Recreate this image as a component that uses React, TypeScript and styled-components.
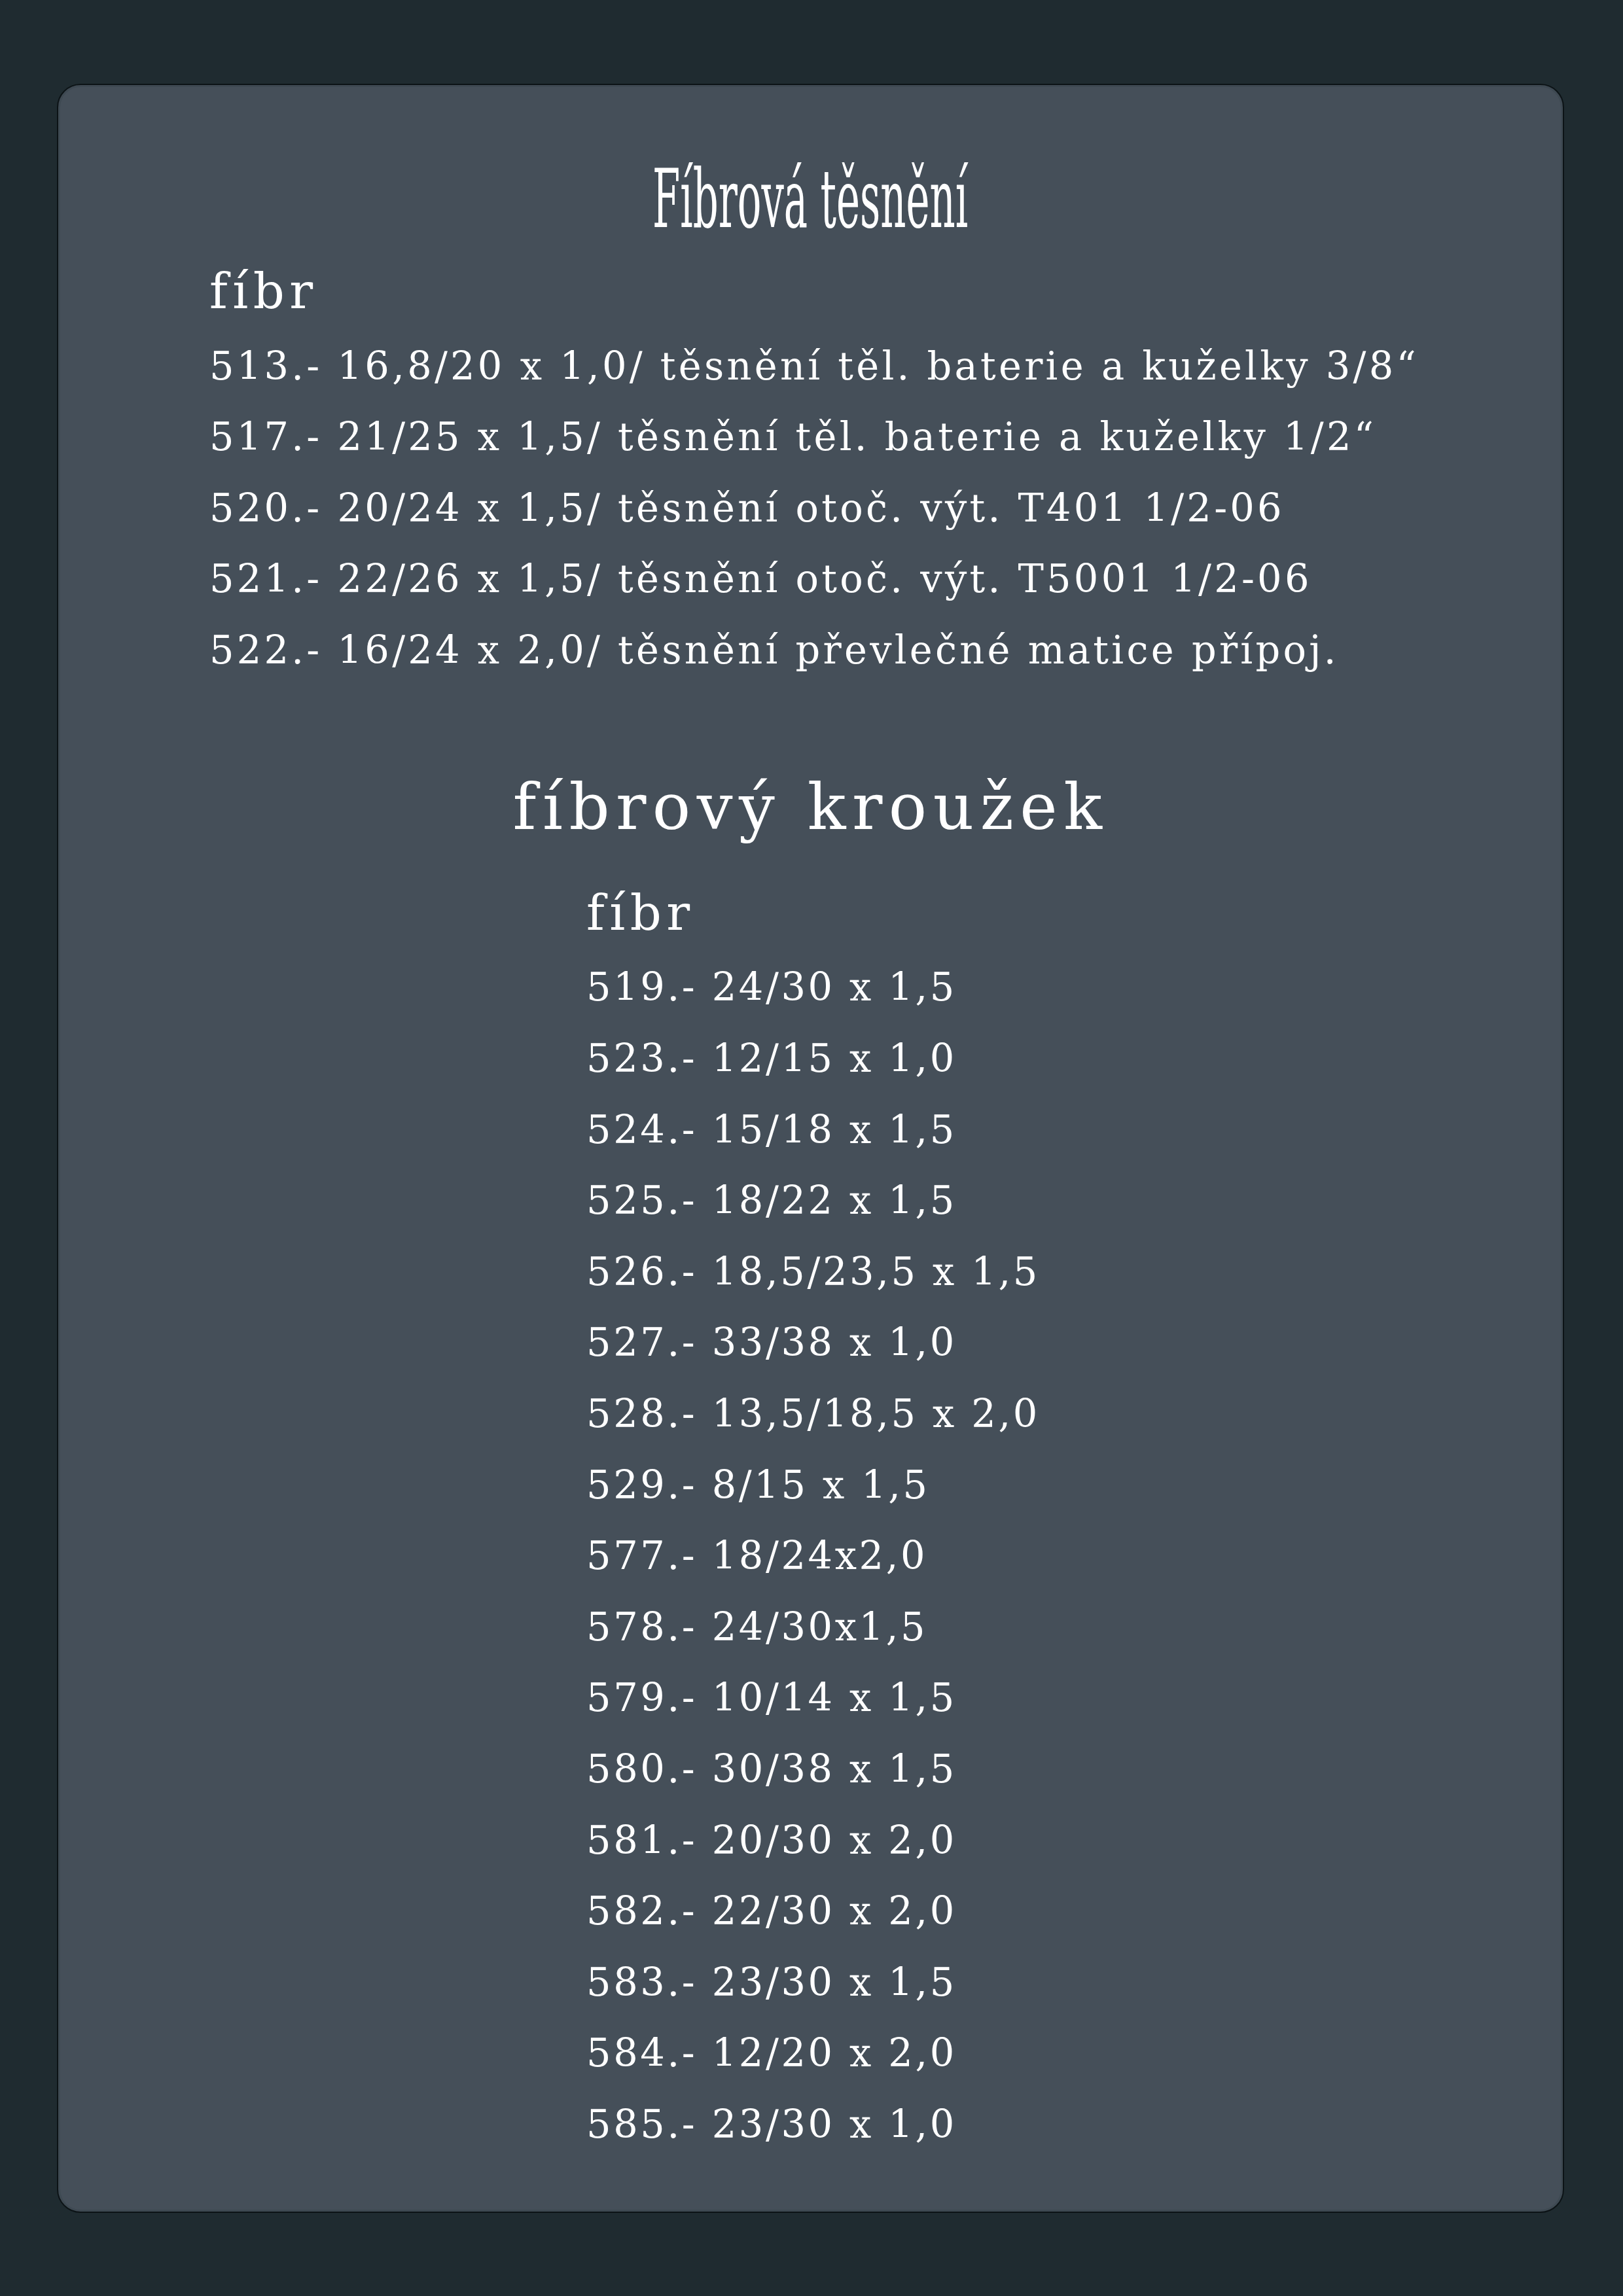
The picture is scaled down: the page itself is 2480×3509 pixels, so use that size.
import React from "react"
import styled, { createGlobalStyle } from "styled-components"

const GlobalStyle = createGlobalStyle`
  html, body {
    margin: 0;
    padding: 0;
    background: #1f2b30;
  }
  body {
    font-family: "DejaVu Serif", "Liberation Serif", serif;
    color: #ffffff;
  }
`

const Page = styled.main`
  padding: 128px 90px 127px 87px;
`

const Panel = styled.section`
  box-sizing: border-box;
  height: 3254px;
  border: 2px solid #0c1316;
  border-radius: 36px;
  background: #454f59;
  box-shadow: inset 0 0 0 3px #3e4952;
  padding-top: 113px;
`

const Title = styled.h1`
  margin: 0;
  height: 123px;
  font-size: 123px;
  line-height: 123px;
  font-weight: normal;
  text-align: center;
  span {
    display: inline-block;
    transform: scaleX(0.495);
    transform-origin: center;
    white-space: nowrap;
  }
`

const List = styled.div<{ $indent: number; $gap: number }>`
  margin-top: ${(p) => p.$gap}px;
  padding-left: ${(p) => p.$indent}px;
`

const ListHead = styled.div`
  font-size: 75px;
  line-height: 119.7px;
  letter-spacing: 7.5px;
`

const Row = styled.div<{ $spacing: number }>`
  font-size: 59px;
  line-height: 108.6px;
  letter-spacing: ${(p) => p.$spacing}px;
  white-space: nowrap;
`

const Subtitle = styled.h2`
  margin: 136px 0 0;
  font-size: 97px;
  line-height: 97px;
  font-weight: normal;
  text-align: center;
  letter-spacing: 9.5px;
`

const seals = [
  "513.- 16,8/20 x 1,0/ těsnění těl. baterie a kuželky 3/8“",
  "517.- 21/25 x 1,5/ těsnění těl. baterie a kuželky 1/2“",
  "520.- 20/24 x 1,5/ těsnění otoč. výt. T401 1/2-06",
  "521.- 22/26 x 1,5/ těsnění otoč. výt. T5001 1/2-06",
  "522.- 16/24 x 2,0/ těsnění převlečné matice přípoj.",
]

const rings = [
  "519.- 24/30 x 1,5",
  "523.- 12/15 x 1,0",
  "524.- 15/18 x 1,5",
  "525.- 18/22 x 1,5",
  "526.- 18,5/23,5 x 1,5",
  "527.- 33/38 x 1,0",
  "528.- 13,5/18,5 x 2,0",
  "529.- 8/15 x 1,5",
  "577.- 18/24x2,0",
  "578.- 24/30x1,5",
  "579.- 10/14 x 1,5",
  "580.- 30/38 x 1,5",
  "581.- 20/30 x 2,0",
  "582.- 22/30 x 2,0",
  "583.- 23/30 x 1,5",
  "584.- 12/20 x 2,0",
  "585.- 23/30 x 1,0",
]

const App = (): JSX.Element => {
  return (
    <>
      <GlobalStyle />
      <Page>
        <Panel>
          <Title>
            <span>Fíbrová těsnění</span>
          </Title>
          <List $indent={231} $gap={20}>
            <ListHead>fíbr</ListHead>
            {seals.map((s) => (
              <Row key={s} $spacing={4.25}>
                {s}
              </Row>
            ))}
          </List>
          <Subtitle>fíbrový kroužek</Subtitle>
          <List $indent={807} $gap={54}>
            <ListHead>fíbr</ListHead>
            {rings.map((r) => (
              <Row key={r} $spacing={3.6}>
                {r}
              </Row>
            ))}
          </List>
        </Panel>
      </Page>
    </>
  )
}
export default App
